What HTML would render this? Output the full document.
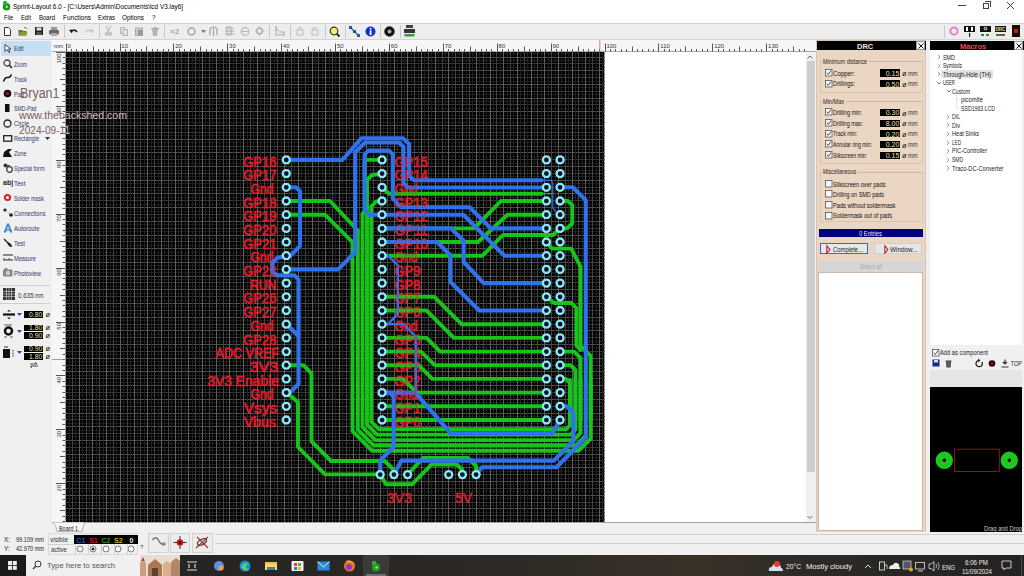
<!DOCTYPE html><html><head><meta charset="utf-8"><style>
*{margin:0;padding:0;box-sizing:border-box}
body{width:1024px;height:576px;overflow:hidden;position:relative;background:#f0f0f0;font-family:"Liberation Sans",sans-serif;color:#000}
.ab{position:absolute}
.t{position:absolute;white-space:nowrap;line-height:1}
svg{position:absolute;overflow:visible}
</style></head><body>
<div class="ab" style="left:0;top:0;width:1024px;height:23px;background:#fff"></div>
<div class="t" style="left:13px;top:2.79px;font-size:7.3px;color:#000;transform:scaleX(0.877);transform-origin:0 0;">Sprint-Layout 6.0 - [C:\Users\Admin\Documents\lcd V3.lay6]</div>
<svg style="left:1px;top:0" width="11" height="11"><circle cx="5.5" cy="6.8" r="3.8" fill="#1e9a1e"/><circle cx="4" cy="3" r="2.2" fill="#34b034"/><circle cx="5.8" cy="6.8" r="1.1" fill="#bfb"/></svg>
<div class="ab" style="left:958px;top:5px;width:8px;height:1px;background:#444"></div>
<div class="ab" style="left:983px;top:3px;width:6px;height:6px;border:1px solid #444"></div><div class="ab" style="left:985px;top:1px;width:6px;height:6px;border-top:1px solid #444;border-right:1px solid #444"></div>
<svg style="left:1006px;top:1px" width="9" height="9"><path d="M1 1L8 8M8 1L1 8" stroke="#3e3e3e" stroke-width="1"/></svg>
<div class="t" style="left:4px;top:14.21px;font-size:7.5px;color:#000;transform:scaleX(0.745);transform-origin:0 0;">File</div>
<div class="t" style="left:21px;top:14.21px;font-size:7.5px;color:#000;transform:scaleX(0.774);transform-origin:0 0;">Edit</div>
<div class="t" style="left:39px;top:14.21px;font-size:7.5px;color:#000;transform:scaleX(0.799);transform-origin:0 0;">Board</div>
<div class="t" style="left:63px;top:14.21px;font-size:7.5px;color:#000;transform:scaleX(0.861);transform-origin:0 0;">Functions</div>
<div class="t" style="left:98px;top:14.21px;font-size:7.5px;color:#000;transform:scaleX(0.800);transform-origin:0 0;">Extras</div>
<div class="t" style="left:122px;top:14.21px;font-size:7.5px;color:#000;transform:scaleX(0.851);transform-origin:0 0;">Options</div>
<div class="t" style="left:152px;top:14.21px;font-size:7.5px;color:#000;transform:scaleX(0.839);transform-origin:0 0;">?</div>
<div class="ab" style="left:0;top:23px;width:1024px;height:17px;background:#ededed;border-top:1px solid #d0d0d0;border-bottom:1px solid #d4d4d4"></div>
<div class="ab" style="left:63.5px;top:25px;width:1px;height:13px;background:#c8c8c8"></div>
<div class="ab" style="left:98.5px;top:25px;width:1px;height:13px;background:#c8c8c8"></div>
<div class="ab" style="left:164px;top:25px;width:1px;height:13px;background:#c8c8c8"></div>
<div class="ab" style="left:269px;top:25px;width:1px;height:13px;background:#c8c8c8"></div>
<div class="ab" style="left:289.5px;top:25px;width:1px;height:13px;background:#c8c8c8"></div>
<div class="ab" style="left:324.5px;top:25px;width:1px;height:13px;background:#c8c8c8"></div>
<div class="ab" style="left:344.5px;top:25px;width:1px;height:13px;background:#c8c8c8"></div>
<div class="ab" style="left:379.5px;top:25px;width:1px;height:13px;background:#c8c8c8"></div>
<div class="ab" style="left:399.5px;top:25px;width:1px;height:13px;background:#c8c8c8"></div>
<div class="ab" style="left:943.5px;top:25px;width:1px;height:13px;background:#c8c8c8"></div>
<svg style="left:4px;top:27px" width="7" height="9"><path d="M0.5 0.5H4.5L6.5 2.5V8.5H0.5Z" fill="#fff" stroke="#333" stroke-width="1"/></svg>
<svg style="left:18px;top:27px" width="10" height="9"><path d="M0.5 3H4L5 4H8.5V8.5H0.5Z" fill="#6d7a2a"/><path d="M2 5H9.5L8 8.5H0.5Z" fill="#8a9a3a"/><path d="M6 0.5Q8 0 9 2" stroke="#5a8a2a" fill="none"/></svg>
<svg style="left:35px;top:27px" width="8" height="8"><rect x="0" y="0" width="8" height="8" fill="#222"/><rect x="1.5" y="0.5" width="5" height="3" fill="#ddd"/><rect x="1.5" y="5" width="5" height="3" fill="#555"/></svg>
<svg style="left:49px;top:27px" width="10" height="9"><rect x="2" y="0" width="6" height="3" fill="#999"/><rect x="0" y="3" width="10" height="4.5" rx="1" fill="#666"/><rect x="2" y="6" width="6" height="3" fill="#aaa"/></svg>
<svg style="left:69px;top:28px" width="9" height="7"><path d="M2 3.5Q6 0.5 8 4" stroke="#223" stroke-width="1.6" fill="none"/><path d="M0 2L3.5 1.5L3 5.5Z" fill="#112"/></svg>
<svg style="left:85px;top:28px" width="9" height="7"><path d="M7 3.5Q3 0.5 1 4" stroke="#c8c8c8" stroke-width="1.6" fill="none"/><path d="M9 2L5.5 1.5L6 5.5Z" fill="#c0c0c0"/></svg>
<svg style="left:105px;top:26px" width="7" height="10"><path d="M1 0L5 7M6 0L2 7" stroke="#b0b0b0" stroke-width="1"/><circle cx="1.8" cy="8" r="1.4" fill="none" stroke="#aaa"/><circle cx="5.2" cy="8" r="1.4" fill="none" stroke="#aaa"/></svg>
<svg style="left:120px;top:27px" width="8" height="9"><rect x="0.5" y="0.5" width="4.5" height="6" fill="#e4e4e4" stroke="#b5b5b5"/><rect x="3" y="2.5" width="4.5" height="6" fill="#e4e4e4" stroke="#b5b5b5"/></svg>
<svg style="left:135px;top:27px" width="9" height="9"><rect x="0.5" y="1" width="7" height="7.5" fill="#c8c8c8" stroke="#aaa"/><rect x="3" y="3" width="5" height="5.5" fill="#9a9a9a"/></svg>
<svg style="left:151px;top:27px" width="8" height="9"><path d="M1 2H7L6 9H2Z" fill="#b5b5b5"/><rect x="0" y="1" width="8" height="1.2" fill="#aaa"/><rect x="3" y="0" width="2" height="1" fill="#aaa"/></svg>
<div class="t" style="left:170px;top:27.5px;font-size:8px;font-weight:bold;color:#a8a8a8">×2</div>
<svg style="left:187px;top:27px" width="10" height="10"><circle cx="4.5" cy="4.5" r="3.5" fill="none" stroke="#a8a8a8" stroke-width="1.6"/></svg>
<svg style="left:201px;top:30px" width="5" height="4"><path d="M0 0H5L2.5 3Z" fill="#777"/></svg>
<svg style="left:209px;top:26px" width="10" height="10"><path d="M1 9V3L3 1M8 9V3L6 1M4.5 0V10" stroke="#a5a5a5" stroke-width="1.2" fill="none"/></svg>
<svg style="left:225px;top:26px" width="10" height="10"><path d="M0 2H9M0 5H9M0 8H9" stroke="#a8a8a8" stroke-width="1.2"/><rect x="2" y="1" width="4" height="8" fill="none" stroke="#b5b5b5"/></svg>
<svg style="left:240px;top:27px" width="10" height="9"><circle cx="5" cy="4.5" r="3.8" fill="none" stroke="#b8b8b8" stroke-width="1.2"/><path d="M1 4.5H9" stroke="#b8b8b8"/></svg>
<svg style="left:255px;top:26px" width="9" height="10"><circle cx="4.5" cy="5" r="2.8" fill="none" stroke="#b0b0b0" stroke-width="1.6"/><path d="M4.5 0V2M4.5 8V10M0 5H2M7 5H9" stroke="#b0b0b0"/></svg>
<svg style="left:275px;top:26px" width="10" height="10"><path d="M1 1V4H4M1 4V9H9V6H4" stroke="#aaa" stroke-width="1.1" fill="none"/><circle cx="1" cy="1" r="1" fill="#aaa"/></svg>
<svg style="left:296px;top:26px" width="8" height="10"><path d="M2 4V2.5Q4 0 6 2.5V4" stroke="#bbb" fill="none"/><rect x="1" y="4" width="6" height="5" fill="none" stroke="#bbb"/></svg>
<svg style="left:311px;top:26px" width="8" height="10"><path d="M2 4V2.5Q4 0 6 2.5" stroke="#bbb" fill="none"/><rect x="1" y="4" width="6" height="5" fill="none" stroke="#bbb"/></svg>
<svg style="left:329px;top:26px" width="12" height="12"><circle cx="5" cy="5" r="3.8" fill="#f4f060" stroke="#333" stroke-width="1.2"/><path d="M7.6 7.6L10.5 10.5" stroke="#222" stroke-width="1.8"/></svg>
<svg style="left:349px;top:26px" width="11" height="11"><path d="M2 2L9 9" stroke="#1a9a3a" stroke-width="1.6"/><rect x="0" y="0" width="3" height="3" fill="#2050d0"/><rect x="8" y="8" width="3" height="3" fill="#2050d0"/><rect x="4" y="4" width="3" height="3" fill="#2050d0"/></svg>
<svg style="left:365px;top:26px" width="11" height="11"><circle cx="5.5" cy="5.5" r="5" fill="#1030d0"/><rect x="4.7" y="4.5" width="1.8" height="4.5" fill="#fff"/><circle cx="5.6" cy="2.8" r="1" fill="#fff"/></svg>
<svg style="left:384px;top:26px" width="11" height="11"><circle cx="5.5" cy="5.5" r="5" fill="#111" stroke="#555" stroke-dasharray="1.2 0.8"/><circle cx="5.5" cy="5.5" r="2" fill="#aaa"/></svg>
<svg style="left:404px;top:25px" width="11" height="12"><rect x="2" y="0" width="7" height="3" fill="#444"/><rect x="0" y="4" width="11" height="4" fill="#333"/><rect x="0.5" y="9" width="10" height="2.5" fill="#3a9a3a"/></svg>
<svg style="left:949px;top:26px" width="10" height="10"><circle cx="5" cy="5" r="3.6" fill="none" stroke="#e080d0" stroke-width="2"/></svg>
<svg style="left:964px;top:26px" width="11" height="11"><rect x="0" y="0" width="11" height="6" fill="#111"/><rect x="2" y="1" width="2" height="4" fill="#fff"/><rect x="7" y="1" width="2" height="4" fill="#fff"/><rect x="5" y="7" width="1.2" height="4" fill="#222"/></svg>
<svg style="left:980px;top:26px" width="11" height="11"><rect x="0" y="0" width="11" height="6" fill="#111"/><circle cx="5.5" cy="2.5" r="1.3" fill="none" stroke="#fff"/><rect x="1" y="8" width="3" height="2" fill="#2a8a2a"/><rect x="6" y="8" width="3" height="2" fill="#2a8a2a"/></svg>
<svg style="left:995px;top:26px" width="11" height="11"><rect x="0" y="0" width="11" height="6" fill="#111"/><text x="0.5" y="5" font-size="4.5" font-family="Liberation Sans" fill="#e8e0a0" font-weight="bold">DRC</text><rect x="1" y="8" width="5" height="2" fill="#2a8a2a"/><rect x="6" y="8" width="4" height="2" fill="#a04040"/></svg>
<svg style="left:1012px;top:25px" width="8" height="12"><rect x="0" y="0" width="8" height="12" fill="#1a0a0a"/><rect x="2" y="4" width="4" height="4" fill="#b02020"/></svg>
<div class="ab" style="left:0;top:40px;width:52px;height:492px;background:#f0f0f0"></div>
<div class="ab" style="left:1px;top:41px;width:50px;height:14.5px;background:#c6dff2"></div>
<div class="t" style="left:14px;top:46.02px;font-size:6.5px;color:#33336e;transform:scaleX(0.848);transform-origin:0 0;">Edit</div>
<div class="t" style="left:14px;top:61.52px;font-size:6.5px;color:#33336e;transform:scaleX(0.782);transform-origin:0 0;">Zoom</div>
<div class="t" style="left:14px;top:76.52px;font-size:6.5px;color:#33336e;transform:scaleX(0.812);transform-origin:0 0;">Track</div>
<div class="t" style="left:14px;top:91.52px;font-size:6.5px;color:#33336e;transform:scaleX(0.865);transform-origin:0 0;">Pad</div>
<div class="t" style="left:14px;top:106.02px;font-size:6.5px;color:#33336e;transform:scaleX(0.799);transform-origin:0 0;">SMD-Pad</div>
<div class="t" style="left:14px;top:121.02px;font-size:6.5px;color:#33336e;transform:scaleX(0.903);transform-origin:0 0;">Circle</div>
<div class="t" style="left:14px;top:136.02px;font-size:6.5px;color:#33336e;transform:scaleX(0.854);transform-origin:0 0;">Rectangle</div>
<div class="t" style="left:14px;top:151.02px;font-size:6.5px;color:#33336e;transform:scaleX(0.844);transform-origin:0 0;">Zone</div>
<div class="t" style="left:14px;top:166.02px;font-size:6.5px;color:#33336e;transform:scaleX(0.844);transform-origin:0 0;">Special form</div>
<div class="t" style="left:14px;top:181.02px;font-size:6.5px;color:#33336e;transform:scaleX(0.965);transform-origin:0 0;">Text</div>
<div class="t" style="left:14px;top:195.52px;font-size:6.5px;color:#33336e;transform:scaleX(0.830);transform-origin:0 0;">Solder mask</div>
<div class="t" style="left:14px;top:210.52px;font-size:6.5px;color:#33336e;transform:scaleX(0.872);transform-origin:0 0;">Connections</div>
<div class="t" style="left:14px;top:225.52px;font-size:6.5px;color:#33336e;transform:scaleX(0.905);transform-origin:0 0;">Autoroute</div>
<div class="t" style="left:14px;top:240.52px;font-size:6.5px;color:#33336e;transform:scaleX(0.923);transform-origin:0 0;">Test</div>
<div class="t" style="left:14px;top:255.52px;font-size:6.5px;color:#33336e;transform:scaleX(0.870);transform-origin:0 0;">Measure</div>
<div class="t" style="left:14px;top:270.52px;font-size:6.5px;color:#33336e;transform:scaleX(0.900);transform-origin:0 0;">Photoview</div>
<div class="ab" style="left:0;top:284.5px;width:50px;height:1px;background:#cfcfcf"></div>
<div class="ab" style="left:0;top:303px;width:50px;height:1px;background:#cfcfcf"></div>
<svg style="left:4px;top:44px" width="7" height="9"><path d="M1 0.5V7.5L3 5.5L5 8.5L6 8L4.3 5H7Z" fill="#fff" stroke="#334" stroke-width="0.9"/></svg>
<svg style="left:3px;top:59px" width="10" height="10"><circle cx="4" cy="4" r="3" fill="none" stroke="#444" stroke-width="1.3"/><path d="M6.3 6.3L9 9" stroke="#222" stroke-width="1.6"/></svg>
<svg style="left:3px;top:74px" width="9" height="8"><path d="M0.5 7.5Q2 3 4.5 3.5T8.5 0.5" stroke="#111" stroke-width="1.5" fill="none"/></svg>
<svg style="left:3px;top:89px" width="9" height="9"><circle cx="4.5" cy="4.5" r="3.8" fill="#1a0808" /><circle cx="4.5" cy="4.5" r="1.6" fill="#8a2020"/></svg>
<svg style="left:5px;top:104px" width="5" height="9"><rect x="0" y="0" width="4.5" height="8" fill="#111"/></svg>
<svg style="left:3px;top:119px" width="9" height="9"><circle cx="4.5" cy="4.5" r="3.5" fill="none" stroke="#222" stroke-width="1.3"/></svg>
<svg style="left:3px;top:135px" width="10" height="7"><rect x="0.7" y="0.7" width="8" height="5.5" fill="none" stroke="#222" stroke-width="1.3"/></svg>
<svg style="left:45px;top:137px" width="5" height="4"><path d="M0 0H5L2.5 3Z" fill="#334"/></svg>
<svg style="left:3px;top:149px" width="9" height="8"><path d="M0 8L1 3L5 0H9L6 3L9 8Z" fill="#111"/></svg>
<svg style="left:3px;top:163px" width="10" height="10"><circle cx="2.5" cy="2.5" r="2" fill="#333"/><circle cx="6.5" cy="6.5" r="2.8" fill="none" stroke="#333" stroke-width="1.2"/><rect x="4" y="2" width="3" height="2" fill="#555"/></svg>
<div class="t" style="left:3px;top:179px;font-size:7px;font-weight:bold;color:#222">ab|</div>
<svg style="left:3px;top:193px" width="9" height="9"><circle cx="4.5" cy="4.5" r="3.6" fill="#e02020"/><circle cx="4.5" cy="4.5" r="1.5" fill="#fff"/></svg>
<svg style="left:3px;top:208px" width="10" height="9"><circle cx="2" cy="2" r="1.6" fill="#111"/><circle cx="8" cy="7" r="1.8" fill="#111"/><path d="M2 2L8 7" stroke="#888" stroke-dasharray="1 1"/></svg>
<svg style="left:3px;top:223px" width="10" height="10"><path d="M0.5 9.5L4 0.5H6L9.5 9.5H7L5 3L3 9.5Z" fill="#4a8ac8"/><path d="M2 7H8" stroke="#4a8ac8" stroke-width="1.3"/></svg>
<svg style="left:3px;top:238px" width="10" height="10"><path d="M1 1L8 8" stroke="#222" stroke-width="1.3"/><path d="M4 4Q9 5 9 9Q5 9 4 4" fill="#222"/></svg>
<svg style="left:3px;top:254px" width="11" height="7"><path d="M0 1H10" stroke="#222"/><path d="M0 6H10M1 4V6M3.5 5V6M6 4V6M8.5 5V6" stroke="#444"/></svg>
<svg style="left:3px;top:268px" width="10" height="9"><rect x="0" y="1.5" width="9.5" height="7" rx="1" fill="#888"/><circle cx="5" cy="5" r="2.2" fill="#ccc"/><rect x="1.5" y="0" width="3" height="2" fill="#888"/></svg>
<svg style="left:3px;top:288px" width="12" height="12"><rect x="0" y="0" width="12" height="12" fill="#333"/><path d="M3.5 0V12M6 0V12M8.5 0V12M0 3.5H12M0 6H12M0 8.5H12" stroke="#ddd" stroke-width="0.6"/></svg>
<svg style="left:3px;top:310px" width="12" height="9"><path d="M0 4.5H12" stroke="#111" stroke-width="2.2"/><path d="M6 0V2M6 7V9" stroke="#333"/><path d="M4.5 1.5L6 0L7.5 1.5M4.5 7.5L6 9L7.5 7.5" stroke="#333" fill="none" stroke-width="0.8"/></svg>
<svg style="left:2px;top:324px" width="13" height="15"><path d="M2 1H10M2 13H5M8 13H11" stroke="#222" stroke-width="0.7"/><circle cx="6.5" cy="7" r="3.5" fill="none" stroke="#111" stroke-width="2.5"/></svg>
<svg style="left:3px;top:346px" width="12" height="13"><rect x="0" y="3" width="7" height="9" fill="#111"/><path d="M1 1H5" stroke="#333"/><path d="M10 4V11" stroke="#333" stroke-dasharray="1 0.6"/></svg>
<svg style="left:16.5px;top:313.0px" width="5" height="4"><path d="M0 0H5L2.5 3Z" fill="#3a3ab0"/></svg>
<svg style="left:16.5px;top:330.0px" width="5" height="4"><path d="M0 0H5L2.5 3Z" fill="#3a3ab0"/></svg>
<svg style="left:16.5px;top:351.0px" width="5" height="4"><path d="M0 0H5L2.5 3Z" fill="#3a3ab0"/></svg>
<div class="ab" style="left:24px;top:311.3px;width:19px;height:6.8px;background:#000"></div>
<div class="t" style="left:24px;top:311.90000000000003px;width:18.3px;text-align:right;font-size:6.8px;color:#e0e0a8">0.80</div>
<div class="t" style="left:45.5px;top:311.0px;font-size:7.5px;color:#222">ø</div>
<div class="ab" style="left:24px;top:324.5px;width:19px;height:6.8px;background:#000"></div>
<div class="t" style="left:24px;top:325.1px;width:18.3px;text-align:right;font-size:6.8px;color:#e0e0a8">1.80</div>
<div class="t" style="left:45.5px;top:324.2px;font-size:7.5px;color:#222">ø</div>
<div class="ab" style="left:24px;top:332px;width:19px;height:6.8px;background:#000"></div>
<div class="t" style="left:24px;top:332.6px;width:18.3px;text-align:right;font-size:6.8px;color:#e0e0a8">0.90</div>
<div class="t" style="left:45.5px;top:331.7px;font-size:7.5px;color:#222">ø</div>
<div class="ab" style="left:24px;top:345.6px;width:19px;height:6.8px;background:#000"></div>
<div class="t" style="left:24px;top:346.20000000000005px;width:18.3px;text-align:right;font-size:6.8px;color:#e0e0a8">0.90</div>
<div class="t" style="left:45.5px;top:345.3px;font-size:7.5px;color:#222">ø</div>
<div class="ab" style="left:24px;top:353px;width:19px;height:6.8px;background:#000"></div>
<div class="t" style="left:24px;top:353.6px;width:18.3px;text-align:right;font-size:6.8px;color:#e0e0a8">1.80</div>
<div class="t" style="left:45.5px;top:352.7px;font-size:7.5px;color:#222">ø</div>
<svg style="left:30px;top:362px" width="8" height="6"><path d="M0 2H7M5 0L7 2M1 4H8M2 6L0 4" stroke="#222" stroke-width="0.8" fill="none"/></svg>
<div class="t" style="left:18px;top:291.91px;font-size:7.5px;color:#333;transform:scaleX(0.831);transform-origin:0 0;">0.635</div>
<div class="t" style="left:34.7px;top:292.82px;font-size:6.5px;color:#333;transform:scaleX(0.767);transform-origin:0 0;">mm</div>
<div class="ab" style="left:52px;top:40px;width:764px;height:12px;background:#f6f6f6;border-bottom:1px solid #a8a8a8"></div>
<div class="ab" style="left:52px;top:52px;width:13.6px;height:470px;background:#f6f6f6"></div>
<div class="ab" style="left:65.6px;top:52px;width:741px;height:470px;background:#fff"></div>
<svg style="left:0;top:0" width="1024" height="576">
<defs><clipPath id="bc"><rect x="65.6" y="52" width="539" height="470"/></clipPath></defs>
<g clip-path="url(#bc)">
<rect x="65.6" y="52" width="539" height="470" fill="#000"/>
<path d="M65.6 519.5H605M65.6 512.5H605M65.6 505.5H605M65.6 498.5H605M65.6 491.5H605M65.6 484.5H605M65.6 478.5H605M65.6 471.5H605M65.6 464.5H605M65.6 457.5H605M65.6 450.5H605M65.6 443.5H605M65.6 436.5H605M65.6 430.5H605M65.6 423.5H605M65.6 416.5H605M65.6 409.5H605M65.6 402.5H605M65.6 395.5H605M65.6 389.5H605M65.6 382.5H605M65.6 375.5H605M65.6 368.5H605M65.6 361.5H605M65.6 354.5H605M65.6 347.5H605M65.6 341.5H605M65.6 334.5H605M65.6 327.5H605M65.6 320.5H605M65.6 313.5H605M65.6 306.5H605M65.6 300.5H605M65.6 293.5H605M65.6 286.5H605M65.6 279.5H605M65.6 272.5H605M65.6 265.5H605M65.6 259.5H605M65.6 252.5H605M65.6 245.5H605M65.6 238.5H605M65.6 231.5H605M65.6 224.5H605M65.6 217.5H605M65.6 211.5H605M65.6 204.5H605M65.6 197.5H605M65.6 190.5H605M65.6 183.5H605M65.6 176.5H605M65.6 170.5H605M65.6 163.5H605M65.6 156.5H605M65.6 149.5H605M65.6 142.5H605M65.6 135.5H605M65.6 128.5H605M65.6 122.5H605M65.6 115.5H605M65.6 108.5H605M65.6 101.5H605M65.6 94.5H605M65.6 87.5H605M65.6 81.5H605M65.6 74.5H605M65.6 67.5H605M65.6 60.5H605M65.6 53.5H605" stroke="#1c1c1c" stroke-width="1"/>
<path d="M65.6 515.5H605M65.6 502.5H605M65.6 488.5H605M65.6 474.5H605M65.6 460.5H605M65.6 447.5H605M65.6 433.5H605M65.6 419.5H605M65.6 406.5H605M65.6 392.5H605M65.6 378.5H605M65.6 365.5H605M65.6 351.5H605M65.6 337.5H605M65.6 324.5H605M65.6 310.5H605M65.6 296.5H605M65.6 282.5H605M65.6 269.5H605M65.6 255.5H605M65.6 241.5H605M65.6 228.5H605M65.6 214.5H605M65.6 200.5H605M65.6 187.5H605M65.6 173.5H605M65.6 159.5H605M65.6 146.5H605M65.6 132.5H605M65.6 118.5H605M65.6 104.5H605M65.6 91.5H605M65.6 77.5H605M65.6 63.5H605" stroke="#373737" stroke-width="1"/>
<path d="M65.6 508.5H605M65.6 495.5H605M65.6 481.5H605M65.6 467.5H605M65.6 454.5H605M65.6 440.5H605M65.6 426.5H605M65.6 413.5H605M65.6 399.5H605M65.6 385.5H605M65.6 371.5H605M65.6 358.5H605M65.6 344.5H605M65.6 330.5H605M65.6 317.5H605M65.6 303.5H605M65.6 289.5H605M65.6 276.5H605M65.6 262.5H605M65.6 248.5H605M65.6 235.5H605M65.6 221.5H605M65.6 207.5H605M65.6 193.5H605M65.6 180.5H605M65.6 166.5H605M65.6 152.5H605M65.6 139.5H605M65.6 125.5H605M65.6 111.5H605M65.6 98.5H605M65.6 84.5H605M65.6 70.5H605M65.6 57.5H605" stroke="#525252" stroke-width="1"/>
<path d="M69.5 52V522M75.5 52V522M82.5 52V522M89.5 52V522M96.5 52V522M103.5 52V522M110.5 52V522M116.5 52V522M123.5 52V522M130.5 52V522M137.5 52V522M144.5 52V522M151.5 52V522M158.5 52V522M164.5 52V522M171.5 52V522M178.5 52V522M185.5 52V522M192.5 52V522M199.5 52V522M205.5 52V522M212.5 52V522M219.5 52V522M226.5 52V522M233.5 52V522M240.5 52V522M247.5 52V522M253.5 52V522M260.5 52V522M267.5 52V522M274.5 52V522M281.5 52V522M288.5 52V522M294.5 52V522M301.5 52V522M308.5 52V522M315.5 52V522M322.5 52V522M329.5 52V522M335.5 52V522M342.5 52V522M349.5 52V522M356.5 52V522M363.5 52V522M370.5 52V522M377.5 52V522M383.5 52V522M390.5 52V522M397.5 52V522M404.5 52V522M411.5 52V522M418.5 52V522M424.5 52V522M431.5 52V522M438.5 52V522M445.5 52V522M452.5 52V522M459.5 52V522M466.5 52V522M472.5 52V522M479.5 52V522M486.5 52V522M493.5 52V522M500.5 52V522M507.5 52V522M513.5 52V522M520.5 52V522M527.5 52V522M534.5 52V522M541.5 52V522M548.5 52V522M555.5 52V522M561.5 52V522M568.5 52V522M575.5 52V522M582.5 52V522M589.5 52V522M596.5 52V522M602.5 52V522" stroke="#222" stroke-width="1"/>
<path d="M72.5 52V522M86.5 52V522M99.5 52V522M113.5 52V522M127.5 52V522M140.5 52V522M154.5 52V522M168.5 52V522M181.5 52V522M195.5 52V522M209.5 52V522M223.5 52V522M236.5 52V522M250.5 52V522M264.5 52V522M277.5 52V522M291.5 52V522M305.5 52V522M318.5 52V522M332.5 52V522M346.5 52V522M359.5 52V522M373.5 52V522M387.5 52V522M401.5 52V522M414.5 52V522M428.5 52V522M442.5 52V522M455.5 52V522M469.5 52V522M483.5 52V522M496.5 52V522M510.5 52V522M524.5 52V522M537.5 52V522M551.5 52V522M565.5 52V522M578.5 52V522M592.5 52V522" stroke="#424242" stroke-width="1"/>
<path d="M65.5 52V522M79.5 52V522M92.5 52V522M106.5 52V522M120.5 52V522M134.5 52V522M147.5 52V522M161.5 52V522M175.5 52V522M188.5 52V522M202.5 52V522M216.5 52V522M229.5 52V522M243.5 52V522M257.5 52V522M270.5 52V522M284.5 52V522M298.5 52V522M312.5 52V522M325.5 52V522M339.5 52V522M353.5 52V522M366.5 52V522M380.5 52V522M394.5 52V522M407.5 52V522M421.5 52V522M435.5 52V522M448.5 52V522M462.5 52V522M476.5 52V522M490.5 52V522M503.5 52V522M517.5 52V522M531.5 52V522M544.5 52V522M558.5 52V522M572.5 52V522M585.5 52V522M599.5 52V522" stroke="#5f5f5f" stroke-width="1"/>
<g font-family="Liberation Sans" font-size="14" fill="#e41b2b" stroke="#e41b2b" stroke-width="0.45">
<text x="243.2" y="166.5" textLength="33.2" lengthAdjust="spacingAndGlyphs">GP16</text>
<text x="243.2" y="180.2" textLength="33.2" lengthAdjust="spacingAndGlyphs">GP17</text>
<text x="250.4" y="193.9" textLength="23.2" lengthAdjust="spacingAndGlyphs">Gnd</text>
<text x="243.2" y="207.6" textLength="33.2" lengthAdjust="spacingAndGlyphs">GP18</text>
<text x="243.2" y="221.3" textLength="33.2" lengthAdjust="spacingAndGlyphs">GP19</text>
<text x="243.2" y="235.0" textLength="33.2" lengthAdjust="spacingAndGlyphs">GP20</text>
<text x="243.2" y="248.6" textLength="33.2" lengthAdjust="spacingAndGlyphs">GP21</text>
<text x="250.4" y="262.3" textLength="23.2" lengthAdjust="spacingAndGlyphs">Gnd</text>
<text x="243.2" y="276.0" textLength="33.2" lengthAdjust="spacingAndGlyphs">GP22</text>
<text x="250" y="289.7" textLength="26.4" lengthAdjust="spacingAndGlyphs">RUN</text>
<text x="243.2" y="303.4" textLength="33.2" lengthAdjust="spacingAndGlyphs">GP26</text>
<text x="243.2" y="317.1" textLength="33.2" lengthAdjust="spacingAndGlyphs">GP27</text>
<text x="250.4" y="330.8" textLength="23.2" lengthAdjust="spacingAndGlyphs">Gnd</text>
<text x="243.2" y="344.5" textLength="33.2" lengthAdjust="spacingAndGlyphs">GP28</text>
<text x="215.6" y="358.2" textLength="63.4" lengthAdjust="spacingAndGlyphs">ADC VREF</text>
<text x="249.4" y="371.9" textLength="29" lengthAdjust="spacingAndGlyphs">3V3</text>
<text x="207.4" y="385.5" textLength="71.6" lengthAdjust="spacingAndGlyphs">3V3 Enable</text>
<text x="250.4" y="399.2" textLength="23.2" lengthAdjust="spacingAndGlyphs">Gnd</text>
<text x="243.7" y="412.9" textLength="33.7" lengthAdjust="spacingAndGlyphs">Vsys</text>
<text x="243.7" y="426.6" textLength="32.2" lengthAdjust="spacingAndGlyphs">Vbus</text>
<text x="394.5" y="166.5" textLength="33.2" lengthAdjust="spacingAndGlyphs">GP15</text>
<text x="394.5" y="180.2" textLength="33.2" lengthAdjust="spacingAndGlyphs">GP14</text>
<text x="394.5" y="193.9" textLength="23.2" lengthAdjust="spacingAndGlyphs">Gnd</text>
<text x="394.5" y="207.6" textLength="33.2" lengthAdjust="spacingAndGlyphs">GP13</text>
<text x="394.5" y="221.3" textLength="33.2" lengthAdjust="spacingAndGlyphs">GP12</text>
<text x="394.5" y="235.0" textLength="33.2" lengthAdjust="spacingAndGlyphs">GP11</text>
<text x="394.5" y="248.6" textLength="33.2" lengthAdjust="spacingAndGlyphs">GP10</text>
<text x="394.5" y="262.3" textLength="23.2" lengthAdjust="spacingAndGlyphs">Gnd</text>
<text x="394.5" y="276.0" textLength="25.8" lengthAdjust="spacingAndGlyphs">GP9</text>
<text x="394.5" y="289.7" textLength="25.8" lengthAdjust="spacingAndGlyphs">GP8</text>
<text x="394.5" y="303.4" textLength="25.8" lengthAdjust="spacingAndGlyphs">GP7</text>
<text x="394.5" y="317.1" textLength="25.8" lengthAdjust="spacingAndGlyphs">GP6</text>
<text x="394.5" y="330.8" textLength="23.2" lengthAdjust="spacingAndGlyphs">Gnd</text>
<text x="394.5" y="344.5" textLength="25.8" lengthAdjust="spacingAndGlyphs">GP5</text>
<text x="394.5" y="358.2" textLength="25.8" lengthAdjust="spacingAndGlyphs">GP4</text>
<text x="394.5" y="371.9" textLength="25.8" lengthAdjust="spacingAndGlyphs">GP3</text>
<text x="394.5" y="385.5" textLength="25.8" lengthAdjust="spacingAndGlyphs">GP2</text>
<text x="394.5" y="399.2" textLength="23.2" lengthAdjust="spacingAndGlyphs">Gnd</text>
<text x="394.5" y="412.9" textLength="25.8" lengthAdjust="spacingAndGlyphs">GP1</text>
<text x="394.5" y="426.6" textLength="25.8" lengthAdjust="spacingAndGlyphs">GP0</text>
</g>
<g font-family="Liberation Sans" font-size="14.5" fill="#cc1f26" stroke="#cc1f26" stroke-width="0.5"><text x="386.7" y="502.8" textLength="25.3" lengthAdjust="spacingAndGlyphs">3V3</text><text x="455" y="502.8" textLength="17" lengthAdjust="spacingAndGlyphs">5V</text></g>
<g fill="none" stroke-linejoin="round" stroke-linecap="round">
<polyline points="286.3,201.0 330.0,201.0 357.7,230.5" stroke="#16c41a" stroke-width="3.9"/>
<polyline points="286.3,214.7 325.0,214.7 352.5,242.2" stroke="#16c41a" stroke-width="3.9"/>
<polyline points="382.1,159.9 365.0,159.9 364.6,161.0 364.6,211.0 362.5,214.0" stroke="#16c41a" stroke-width="3.9"/>
<polyline points="382.1,173.6 372.0,175.0 367.0,180.0" stroke="#16c41a" stroke-width="3.9"/>
<polyline points="382.1,201.0 376.0,201.5 371.2,206.7" stroke="#16c41a" stroke-width="3.9"/>
<polyline points="382.1,187.3 389.0,193.7 541.7,193.7" stroke="#16c41a" stroke-width="3.9"/>
<polyline points="382.1,228.4 474.0,228.4 501.0,201.0 546.4,201.0" stroke="#16c41a" stroke-width="3.9"/>
<polyline points="382.1,242.0 478.0,242.0 507.5,214.7 546.4,214.7" stroke="#16c41a" stroke-width="3.9"/>
<polyline points="382.1,255.7 482.5,255.7 503.0,235.0 553.0,235.0 560.1,228.4" stroke="#16c41a" stroke-width="3.9"/>
<polyline points="560.1,201.0 568.0,201.0 572.2,205.0 572.2,223.5 567.0,228.4 560.1,228.4" stroke="#16c41a" stroke-width="3.9"/>
<polyline points="382.1,296.8 434.3,296.8 461.5,324.2 546.4,324.2" stroke="#16c41a" stroke-width="3.9"/>
<polyline points="382.1,310.5 426.5,310.5 453.9,337.9 546.4,337.9" stroke="#16c41a" stroke-width="3.9"/>
<polyline points="382.1,337.9 426.5,337.9 440.2,351.6 546.4,351.6" stroke="#16c41a" stroke-width="3.9"/>
<polyline points="382.1,351.6 421.0,351.6 434.7,365.2 546.4,365.2" stroke="#16c41a" stroke-width="3.9"/>
<polyline points="382.1,365.2 418.6,365.2 432.3,378.9 546.4,378.9" stroke="#16c41a" stroke-width="3.9"/>
<polyline points="382.1,378.9 403.0,378.9 416.7,392.6 546.4,392.6" stroke="#16c41a" stroke-width="3.9"/>
<polyline points="382.1,406.3 546.4,406.3" stroke="#16c41a" stroke-width="3.9"/>
<polyline points="382.1,420.0 546.4,420.0" stroke="#16c41a" stroke-width="3.9"/>
<polyline points="286.3,365.2 303.4,365.2 311.5,373.4 311.5,441.4 331.0,461.0 384.7,461.0 393.9,470.0 393.9,474.6" stroke="#16c41a" stroke-width="3.9"/>
<polyline points="286.3,392.6 298.0,402.0 298.0,447.0 325.0,474.4 380.2,474.4" stroke="#16c41a" stroke-width="3.9"/>
<polyline points="380.2,474.6 386.0,484.3 412.0,484.3 431.5,464.6 457.0,464.6 462.4,470.0 462.4,474.6" stroke="#16c41a" stroke-width="3.9"/>
<polyline points="407.6,474.6 423.0,458.0 468.0,458.0 476.1,466.0 476.1,474.6" stroke="#16c41a" stroke-width="3.9"/>
<polyline points="546.4,296.8 554.0,303.0 571.5,303.0 576.3,308.0 576.3,345.4 580.5,350.0" stroke="#16c41a" stroke-width="3.9"/>
<polyline points="546.4,242.0 552.0,248.6 571.2,248.6 580.5,266.6 580.5,346.0 590.7,356.0 590.7,420.0" stroke="#16c41a" stroke-width="3.9"/>
<polyline points="560.1,351.6 574.0,351.6 580.5,358.0 580.5,420.0" stroke="#16c41a" stroke-width="3.9"/>
<polyline points="560.1,365.2 570.5,365.2 575.4,370.0 575.4,420.0" stroke="#16c41a" stroke-width="3.9"/>
<polyline points="560.1,378.9 566.0,378.9 569.9,383.0 569.9,420.0" stroke="#16c41a" stroke-width="3.9"/>
<polyline points="352.5,242.2 352.5,431.2 372.0,450.7 578.7,450.7 590.7,438.7 590.7,380.0" stroke="#16c41a" stroke-width="3.9"/>
<polyline points="357.7,230.5 357.7,429.7 373.2,445.2 576.3,445.2 585.8,435.7 585.8,437.0" stroke="#16c41a" stroke-width="3.9"/>
<polyline points="362.5,214.0 362.5,427.1 375.5,440.1 573.5,440.1 580.5,433.1 580.5,380.0" stroke="#16c41a" stroke-width="3.9"/>
<polyline points="367.0,180.0 367.0,424.6 377.0,434.6 570.4,434.6 575.4,429.6 575.4,380.0" stroke="#16c41a" stroke-width="3.9"/>
<polyline points="371.2,206.7 371.2,421.7 378.7,429.2 566.4,429.2 569.9,425.7 569.9,380.0" stroke="#16c41a" stroke-width="3.9"/>
<polyline points="541.7,193.7 552.0,193.7" stroke="#16c41a" stroke-width="1.2"/>
<polyline points="286.3,159.9 342.5,159.9 361.5,138.2 403.0,138.2 409.0,144.0 409.0,176.0 414.0,180.3 541.7,180.3" stroke="#2f72ee" stroke-width="4.1"/>
<polyline points="286.3,269.4 338.2,269.4 355.3,252.0 355.3,152.0 365.0,142.5 399.0,142.5 403.5,147.0 403.5,183.0 408.0,187.5 546.4,187.5" stroke="#2f72ee" stroke-width="4.1"/>
<polyline points="382.1,214.7 369.0,214.7 364.6,209.5 364.6,154.5 368.5,150.6 389.0,150.6 393.0,154.6 393.0,198.5 401.0,207.3 469.7,207.3 490.7,228.4 546.4,228.4" stroke="#2f72ee" stroke-width="4.1"/>
<polyline points="286.3,187.3 296.0,187.3 300.0,191.3 300.0,246.0 290.5,255.7" stroke="#2f72ee" stroke-width="4.1"/>
<polyline points="286.3,255.7 277.0,258.0 272.5,263.0 272.5,271.5 276.5,275.4 294.5,275.4 298.5,279.4 298.5,384.0 290.0,392.6" stroke="#2f72ee" stroke-width="4.1"/>
<polyline points="286.3,324.2 298.5,336.0" stroke="#2f72ee" stroke-width="4.1"/>
<polyline points="382.1,214.7 463.4,214.7 504.4,255.7 546.4,255.7" stroke="#2f72ee" stroke-width="4.1"/>
<polyline points="382.1,228.4 451.0,228.4 463.6,240.8 463.6,262.0 483.7,283.1 546.4,283.1" stroke="#2f72ee" stroke-width="4.1"/>
<polyline points="382.1,242.0 437.0,242.0 450.5,255.3 450.5,282.0 479.3,310.5 546.4,310.5" stroke="#2f72ee" stroke-width="4.1"/>
<polyline points="382.1,392.6 390.0,392.6 393.7,396.5 393.7,446.9 380.2,460.4 380.2,474.6" stroke="#2f72ee" stroke-width="4.1"/>
<polyline points="393.9,474.6 401.5,460.6 553.9,460.6 573.3,441.0 573.3,413.0 567.0,406.3 560.1,406.3" stroke="#2f72ee" stroke-width="4.1"/>
<polyline points="560.1,187.3 572.8,187.3 585.8,200.3 585.8,437.5 556.6,467.3 482.0,467.3 476.1,474.6" stroke="#2f72ee" stroke-width="4.1"/>
<polyline points="382.1,392.6 415.3,392.6 450.7,433.4 552.5,433.4 560.1,420.0" stroke="#2f72ee" stroke-width="4.1"/>
<polyline points="382.1,255.7 388.0,255.7 397.8,265.0 397.8,314.0 388.0,324.2 382.1,324.2" stroke="#2f72ee" stroke-width="2.4"/>
<polyline points="382.1,324.2 403.4,324.2 416.0,337.0 416.0,392.6" stroke="#2f72ee" stroke-width="2.4"/>
<polyline points="541.7,180.3 551.0,180.3 552.8,183.0 552.8,208.0 556.5,212.2 560.1,214.7" stroke="#2f72ee" stroke-width="1.2"/>
</g>
<g fill="#001030" stroke="#8fe8ee" stroke-width="2.3">
<circle cx="286.3" cy="159.9" r="3.5"/>
<circle cx="382.1" cy="159.9" r="3.5"/>
<circle cx="546.4" cy="159.9" r="3.5"/>
<circle cx="560.1" cy="159.9" r="3.5"/>
<circle cx="286.3" cy="173.6" r="3.5"/>
<circle cx="382.1" cy="173.6" r="3.5"/>
<circle cx="546.4" cy="173.6" r="3.5"/>
<circle cx="560.1" cy="173.6" r="3.5"/>
<circle cx="286.3" cy="187.3" r="3.5"/>
<circle cx="382.1" cy="187.3" r="3.5"/>
<circle cx="546.4" cy="187.3" r="3.5"/>
<circle cx="560.1" cy="187.3" r="3.5"/>
<circle cx="286.3" cy="201.0" r="3.5"/>
<circle cx="382.1" cy="201.0" r="3.5"/>
<circle cx="546.4" cy="201.0" r="3.5"/>
<circle cx="560.1" cy="201.0" r="3.5"/>
<circle cx="286.3" cy="214.7" r="3.5"/>
<circle cx="382.1" cy="214.7" r="3.5"/>
<circle cx="546.4" cy="214.7" r="3.5"/>
<circle cx="560.1" cy="214.7" r="3.5"/>
<circle cx="286.3" cy="228.4" r="3.5"/>
<circle cx="382.1" cy="228.4" r="3.5"/>
<circle cx="546.4" cy="228.4" r="3.5"/>
<circle cx="560.1" cy="228.4" r="3.5"/>
<circle cx="286.3" cy="242.0" r="3.5"/>
<circle cx="382.1" cy="242.0" r="3.5"/>
<circle cx="546.4" cy="242.0" r="3.5"/>
<circle cx="560.1" cy="242.0" r="3.5"/>
<circle cx="286.3" cy="255.7" r="3.5"/>
<circle cx="382.1" cy="255.7" r="3.5"/>
<circle cx="546.4" cy="255.7" r="3.5"/>
<circle cx="560.1" cy="255.7" r="3.5"/>
<circle cx="286.3" cy="269.4" r="3.5"/>
<circle cx="382.1" cy="269.4" r="3.5"/>
<circle cx="546.4" cy="269.4" r="3.5"/>
<circle cx="560.1" cy="269.4" r="3.5"/>
<circle cx="286.3" cy="283.1" r="3.5"/>
<circle cx="382.1" cy="283.1" r="3.5"/>
<circle cx="546.4" cy="283.1" r="3.5"/>
<circle cx="560.1" cy="283.1" r="3.5"/>
<circle cx="286.3" cy="296.8" r="3.5"/>
<circle cx="382.1" cy="296.8" r="3.5"/>
<circle cx="546.4" cy="296.8" r="3.5"/>
<circle cx="560.1" cy="296.8" r="3.5"/>
<circle cx="286.3" cy="310.5" r="3.5"/>
<circle cx="382.1" cy="310.5" r="3.5"/>
<circle cx="546.4" cy="310.5" r="3.5"/>
<circle cx="560.1" cy="310.5" r="3.5"/>
<circle cx="286.3" cy="324.2" r="3.5"/>
<circle cx="382.1" cy="324.2" r="3.5"/>
<circle cx="546.4" cy="324.2" r="3.5"/>
<circle cx="560.1" cy="324.2" r="3.5"/>
<circle cx="286.3" cy="337.9" r="3.5"/>
<circle cx="382.1" cy="337.9" r="3.5"/>
<circle cx="546.4" cy="337.9" r="3.5"/>
<circle cx="560.1" cy="337.9" r="3.5"/>
<circle cx="286.3" cy="351.6" r="3.5"/>
<circle cx="382.1" cy="351.6" r="3.5"/>
<circle cx="546.4" cy="351.6" r="3.5"/>
<circle cx="560.1" cy="351.6" r="3.5"/>
<circle cx="286.3" cy="365.2" r="3.5"/>
<circle cx="382.1" cy="365.2" r="3.5"/>
<circle cx="546.4" cy="365.2" r="3.5"/>
<circle cx="560.1" cy="365.2" r="3.5"/>
<circle cx="286.3" cy="378.9" r="3.5"/>
<circle cx="382.1" cy="378.9" r="3.5"/>
<circle cx="546.4" cy="378.9" r="3.5"/>
<circle cx="560.1" cy="378.9" r="3.5"/>
<circle cx="286.3" cy="392.6" r="3.5"/>
<circle cx="382.1" cy="392.6" r="3.5"/>
<circle cx="546.4" cy="392.6" r="3.5"/>
<circle cx="560.1" cy="392.6" r="3.5"/>
<circle cx="286.3" cy="406.3" r="3.5"/>
<circle cx="382.1" cy="406.3" r="3.5"/>
<circle cx="546.4" cy="406.3" r="3.5"/>
<circle cx="560.1" cy="406.3" r="3.5"/>
<circle cx="286.3" cy="420.0" r="3.5"/>
<circle cx="382.1" cy="420.0" r="3.5"/>
<circle cx="546.4" cy="420.0" r="3.5"/>
<circle cx="560.1" cy="420.0" r="3.5"/>
<circle cx="380.2" cy="474.6" r="3.5"/>
<circle cx="393.9" cy="474.6" r="3.5"/>
<circle cx="407.6" cy="474.6" r="3.5"/>
<circle cx="448.7" cy="474.6" r="3.5"/>
<circle cx="462.4" cy="474.6" r="3.5"/>
<circle cx="476.1" cy="474.6" r="3.5"/>
</g>
<g opacity="0.45"><g font-family="Liberation Sans" font-size="14" fill="#e41b2b" stroke="#e41b2b" stroke-width="0.45">
<text x="243.2" y="166.5" textLength="33.2" lengthAdjust="spacingAndGlyphs">GP16</text>
<text x="243.2" y="180.2" textLength="33.2" lengthAdjust="spacingAndGlyphs">GP17</text>
<text x="250.4" y="193.9" textLength="23.2" lengthAdjust="spacingAndGlyphs">Gnd</text>
<text x="243.2" y="207.6" textLength="33.2" lengthAdjust="spacingAndGlyphs">GP18</text>
<text x="243.2" y="221.3" textLength="33.2" lengthAdjust="spacingAndGlyphs">GP19</text>
<text x="243.2" y="235.0" textLength="33.2" lengthAdjust="spacingAndGlyphs">GP20</text>
<text x="243.2" y="248.6" textLength="33.2" lengthAdjust="spacingAndGlyphs">GP21</text>
<text x="250.4" y="262.3" textLength="23.2" lengthAdjust="spacingAndGlyphs">Gnd</text>
<text x="243.2" y="276.0" textLength="33.2" lengthAdjust="spacingAndGlyphs">GP22</text>
<text x="250" y="289.7" textLength="26.4" lengthAdjust="spacingAndGlyphs">RUN</text>
<text x="243.2" y="303.4" textLength="33.2" lengthAdjust="spacingAndGlyphs">GP26</text>
<text x="243.2" y="317.1" textLength="33.2" lengthAdjust="spacingAndGlyphs">GP27</text>
<text x="250.4" y="330.8" textLength="23.2" lengthAdjust="spacingAndGlyphs">Gnd</text>
<text x="243.2" y="344.5" textLength="33.2" lengthAdjust="spacingAndGlyphs">GP28</text>
<text x="215.6" y="358.2" textLength="63.4" lengthAdjust="spacingAndGlyphs">ADC VREF</text>
<text x="249.4" y="371.9" textLength="29" lengthAdjust="spacingAndGlyphs">3V3</text>
<text x="207.4" y="385.5" textLength="71.6" lengthAdjust="spacingAndGlyphs">3V3 Enable</text>
<text x="250.4" y="399.2" textLength="23.2" lengthAdjust="spacingAndGlyphs">Gnd</text>
<text x="243.7" y="412.9" textLength="33.7" lengthAdjust="spacingAndGlyphs">Vsys</text>
<text x="243.7" y="426.6" textLength="32.2" lengthAdjust="spacingAndGlyphs">Vbus</text>
<text x="394.5" y="166.5" textLength="33.2" lengthAdjust="spacingAndGlyphs">GP15</text>
<text x="394.5" y="180.2" textLength="33.2" lengthAdjust="spacingAndGlyphs">GP14</text>
<text x="394.5" y="193.9" textLength="23.2" lengthAdjust="spacingAndGlyphs">Gnd</text>
<text x="394.5" y="207.6" textLength="33.2" lengthAdjust="spacingAndGlyphs">GP13</text>
<text x="394.5" y="221.3" textLength="33.2" lengthAdjust="spacingAndGlyphs">GP12</text>
<text x="394.5" y="235.0" textLength="33.2" lengthAdjust="spacingAndGlyphs">GP11</text>
<text x="394.5" y="248.6" textLength="33.2" lengthAdjust="spacingAndGlyphs">GP10</text>
<text x="394.5" y="262.3" textLength="23.2" lengthAdjust="spacingAndGlyphs">Gnd</text>
<text x="394.5" y="276.0" textLength="25.8" lengthAdjust="spacingAndGlyphs">GP9</text>
<text x="394.5" y="289.7" textLength="25.8" lengthAdjust="spacingAndGlyphs">GP8</text>
<text x="394.5" y="303.4" textLength="25.8" lengthAdjust="spacingAndGlyphs">GP7</text>
<text x="394.5" y="317.1" textLength="25.8" lengthAdjust="spacingAndGlyphs">GP6</text>
<text x="394.5" y="330.8" textLength="23.2" lengthAdjust="spacingAndGlyphs">Gnd</text>
<text x="394.5" y="344.5" textLength="25.8" lengthAdjust="spacingAndGlyphs">GP5</text>
<text x="394.5" y="358.2" textLength="25.8" lengthAdjust="spacingAndGlyphs">GP4</text>
<text x="394.5" y="371.9" textLength="25.8" lengthAdjust="spacingAndGlyphs">GP3</text>
<text x="394.5" y="385.5" textLength="25.8" lengthAdjust="spacingAndGlyphs">GP2</text>
<text x="394.5" y="399.2" textLength="23.2" lengthAdjust="spacingAndGlyphs">Gnd</text>
<text x="394.5" y="412.9" textLength="25.8" lengthAdjust="spacingAndGlyphs">GP1</text>
<text x="394.5" y="426.6" textLength="25.8" lengthAdjust="spacingAndGlyphs">GP0</text>
</g>
<g font-family="Liberation Sans" font-size="14.5" fill="#cc1f26" stroke="#cc1f26" stroke-width="0.5"><text x="386.7" y="502.8" textLength="25.3" lengthAdjust="spacingAndGlyphs">3V3</text><text x="455" y="502.8" textLength="17" lengthAdjust="spacingAndGlyphs">5V</text></g></g>
</g></svg>
<svg style="left:0;top:0" width="1024" height="576"><path d="M66.5 43.5V51.5M71.5 49V51.5M76.5 49V51.5M82.5 49V51.5M87.5 49V51.5M93.5 46.5V51.5M98.5 49V51.5M103.5 49V51.5M109.5 49V51.5M114.5 49V51.5M120.5 43.5V51.5M125.5 49V51.5M130.5 49V51.5M136.5 49V51.5M141.5 49V51.5M146.5 46.5V51.5M152.5 49V51.5M157.5 49V51.5M163.5 49V51.5M168.5 49V51.5M173.5 43.5V51.5M179.5 49V51.5M184.5 49V51.5M190.5 49V51.5M195.5 49V51.5M200.5 46.5V51.5M206.5 49V51.5M211.5 49V51.5M217.5 49V51.5M222.5 49V51.5M227.5 43.5V51.5M233.5 49V51.5M238.5 49V51.5M243.5 49V51.5M249.5 49V51.5M254.5 46.5V51.5M260.5 49V51.5M265.5 49V51.5M270.5 49V51.5M276.5 49V51.5M281.5 43.5V51.5M287.5 49V51.5M292.5 49V51.5M297.5 49V51.5M303.5 49V51.5M308.5 46.5V51.5M314.5 49V51.5M319.5 49V51.5M324.5 49V51.5M330.5 49V51.5M335.5 43.5V51.5M340.5 49V51.5M346.5 49V51.5M351.5 49V51.5M357.5 49V51.5M362.5 46.5V51.5M367.5 49V51.5M373.5 49V51.5M378.5 49V51.5M384.5 49V51.5M389.5 43.5V51.5M394.5 49V51.5M400.5 49V51.5M405.5 49V51.5M411.5 49V51.5M416.5 46.5V51.5M421.5 49V51.5M427.5 49V51.5M432.5 49V51.5M438.5 49V51.5M443.5 43.5V51.5M448.5 49V51.5M454.5 49V51.5M459.5 49V51.5M464.5 49V51.5M470.5 46.5V51.5M475.5 49V51.5M481.5 49V51.5M486.5 49V51.5M491.5 49V51.5M497.5 43.5V51.5M502.5 49V51.5M508.5 49V51.5M513.5 49V51.5M518.5 49V51.5M524.5 46.5V51.5M529.5 49V51.5M535.5 49V51.5M540.5 49V51.5M545.5 49V51.5M551.5 43.5V51.5M556.5 49V51.5M561.5 49V51.5M567.5 49V51.5M572.5 49V51.5M578.5 46.5V51.5M583.5 49V51.5M588.5 49V51.5M594.5 49V51.5M599.5 49V51.5M605.5 43.5V51.5M610.5 49V51.5M615.5 49V51.5M621.5 49V51.5M626.5 49V51.5M632.5 46.5V51.5M637.5 49V51.5M642.5 49V51.5M648.5 49V51.5M653.5 49V51.5M658.5 43.5V51.5M664.5 49V51.5M669.5 49V51.5M675.5 49V51.5M680.5 49V51.5M685.5 46.5V51.5M691.5 49V51.5M696.5 49V51.5M702.5 49V51.5M707.5 49V51.5M712.5 43.5V51.5M718.5 49V51.5M723.5 49V51.5M729.5 49V51.5M734.5 49V51.5M739.5 46.5V51.5M745.5 49V51.5M750.5 49V51.5M756.5 49V51.5M761.5 49V51.5M766.5 43.5V51.5M772.5 49V51.5M777.5 49V51.5M782.5 49V51.5M788.5 49V51.5M793.5 46.5V51.5M799.5 49V51.5M804.5 49V51.5M62.5 521.5H65M62.5 516.5H65M60 510.5H65M62.5 505.5H65M62.5 499.5H65M62.5 494.5H65M62.5 489.5H65M56 483.5H65M62.5 478.5H65M62.5 472.5H65M62.5 467.5H65M62.5 462.5H65M60 456.5H65M62.5 451.5H65M62.5 445.5H65M62.5 440.5H65M62.5 435.5H65M56 429.5H65M62.5 424.5H65M62.5 419.5H65M62.5 413.5H65M62.5 408.5H65M60 402.5H65M62.5 397.5H65M62.5 392.5H65M62.5 386.5H65M62.5 381.5H65M56 375.5H65M62.5 370.5H65M62.5 365.5H65M62.5 359.5H65M62.5 354.5H65M60 348.5H65M62.5 343.5H65M62.5 338.5H65M62.5 332.5H65M62.5 327.5H65M56 322.5H65M62.5 316.5H65M62.5 311.5H65M62.5 305.5H65M62.5 300.5H65M60 295.5H65M62.5 289.5H65M62.5 284.5H65M62.5 278.5H65M62.5 273.5H65M56 268.5H65M62.5 262.5H65M62.5 257.5H65M62.5 251.5H65M62.5 246.5H65M60 241.5H65M62.5 235.5H65M62.5 230.5H65M62.5 224.5H65M62.5 219.5H65M56 214.5H65M62.5 208.5H65M62.5 203.5H65M62.5 198.5H65M62.5 192.5H65M60 187.5H65M62.5 181.5H65M62.5 176.5H65M62.5 171.5H65M62.5 165.5H65M56 160.5H65M62.5 154.5H65M62.5 149.5H65M62.5 144.5H65M62.5 138.5H65M60 133.5H65M62.5 127.5H65M62.5 122.5H65M62.5 117.5H65M62.5 111.5H65M56 106.5H65M62.5 101.5H65M62.5 95.5H65M62.5 90.5H65M62.5 84.5H65M60 79.5H65M62.5 74.5H65M62.5 68.5H65M62.5 63.5H65M62.5 57.5H65M56 52.5H65" stroke="#555" stroke-width="1"/>
<g font-family="Liberation Sans" font-size="6" fill="#333">
<text x="67.4" y="48.3">0</text>
<text x="121.3" y="48.3">10</text>
<text x="175.2" y="48.3">20</text>
<text x="229.1" y="48.3">30</text>
<text x="283.0" y="48.3">40</text>
<text x="336.9" y="48.3">50</text>
<text x="390.8" y="48.3">60</text>
<text x="444.7" y="48.3">70</text>
<text x="498.6" y="48.3">80</text>
<text x="552.5" y="48.3">90</text>
<text x="606.4" y="48.3">100</text>
<text x="660.3" y="48.3">110</text>
<text x="714.2" y="48.3">120</text>
<text x="768.1" y="48.3">130</text>
<text transform="translate(60.8,484.7) rotate(-90)" text-anchor="end">20</text>
<text transform="translate(60.8,430.8) rotate(-90)" text-anchor="end">30</text>
<text transform="translate(60.8,376.9) rotate(-90)" text-anchor="end">40</text>
<text transform="translate(60.8,323.0) rotate(-90)" text-anchor="end">50</text>
<text transform="translate(60.8,269.1) rotate(-90)" text-anchor="end">60</text>
<text transform="translate(60.8,215.2) rotate(-90)" text-anchor="end">70</text>
<text transform="translate(60.8,161.3) rotate(-90)" text-anchor="end">80</text>
<text transform="translate(60.8,107.4) rotate(-90)" text-anchor="end">90</text>
<text transform="translate(60.8,53.5) rotate(-90)" text-anchor="end">100</text>
<text x="54" y="48.3" font-size="5.5">mm</text>
</g>
<path d="M599.8 40V52M52 359.5H65" stroke="#e06060" stroke-width="0.8"/>
</svg>
<div class="ab" style="left:806px;top:52px;width:10px;height:470px;background:#f0f0f0"></div>
<div class="ab" style="left:807px;top:61px;width:7.5px;height:411px;background:#cdcdcd"></div>
<div class="ab" style="left:52px;top:522px;width:764px;height:10px;background:#f0f0f0;border-top:1px solid #a0a0a0"></div>
<svg style="left:0;top:0" width="1024" height="576"><path d="M52.5 522.5Q56 524 57 531.5H82L84.5 522.5" fill="#f7f7f7" stroke="#999" stroke-width="0.7"/><path d="M807.5 58.5L810 56L812.5 58.5M807.5 516L810 518.5L812.5 516" stroke="#555" stroke-width="0.9" fill="none"/></svg>
<div class="t" style="left:59px;top:525.52px;font-size:6.5px;color:#222;transform:scaleX(0.834);transform-origin:0 0;">Board 1</div>
<div class="ab" style="left:816px;top:40px;width:110px;height:493px;background:#ebd6c4;border:1px solid #d8c4b4"></div>
<div class="ab" style="left:816.5px;top:41px;width:109px;height:9px;background:#000"></div>
<div class="t" style="left:857px;top:42.91px;font-size:7.5px;color:#e8e8e8;font-weight:bold;">DRC</div>
<div class="ab" style="left:916px;top:41px;width:8.5px;height:8.5px;background:#f4f4f4;border:0.5px solid #999"></div>
<svg style="left:917.5px;top:42.5px" width="6" height="6"><path d="M0.5 0.5L5.5 5.5M5.5 0.5L0.5 5.5" stroke="#111" stroke-width="1"/></svg>
<div class="ab" style="left:820px;top:61px;width:102.5px;height:31.5px;border:1px solid #d9c3b1;border-top-color:#cbb6a5"></div>
<div class="ab" style="left:822px;top:58px;width:47px;height:6px;background:#ebd6c4"></div>
<div class="t" style="left:823px;top:58.72px;font-size:6.5px;color:#2a1a1a;transform:scaleX(0.840);transform-origin:0 0;">Minimum distance</div>
<div class="ab" style="left:820px;top:101px;width:102.5px;height:62.5px;border:1px solid #d9c3b1;border-top-color:#cbb6a5"></div>
<div class="ab" style="left:822px;top:98px;width:24px;height:6px;background:#ebd6c4"></div>
<div class="t" style="left:823px;top:98.72px;font-size:6.5px;color:#2a1a1a;transform:scaleX(0.855);transform-origin:0 0;">Min/Max</div>
<div class="ab" style="left:820px;top:171.5px;width:102.5px;height:50.5px;border:1px solid #d9c3b1;border-top-color:#cbb6a5"></div>
<div class="ab" style="left:822px;top:168.5px;width:36px;height:6px;background:#ebd6c4"></div>
<div class="t" style="left:823px;top:169.22px;font-size:6.5px;color:#2a1a1a;transform:scaleX(0.801);transform-origin:0 0;">Miscellaneous</div>
<svg style="left:824.5px;top:68.7px" width="8" height="8"><rect x="0.5" y="0.5" width="6.5" height="6.5" fill="#f8f8f8" stroke="#555" stroke-width="0.8"/><path d="M1.8 3.8L3.3 5.4L6 1.6" stroke="#333" stroke-width="0.9" fill="none"/></svg>
<div class="t" style="left:832.5px;top:70.62px;font-size:6.5px;color:#111;transform:scaleX(0.951);transform-origin:0 0;">Copper:</div>
<div class="ab" style="left:880px;top:69.4px;width:20px;height:7.2px;background:#000"></div>
<div class="t" style="left:880px;top:69.8px;width:19.3px;text-align:right;font-size:7px;color:#e6e6a0">0.15</div>
<div class="t" style="left:902px;top:70.01px;font-size:7.5px;color:#222;">ø</div>
<div class="t" style="left:907.5px;top:70.62px;font-size:6.5px;color:#333;transform:scaleX(0.877);transform-origin:0 0;">mm</div>
<svg style="left:824.5px;top:79.5px" width="8" height="8"><rect x="0.5" y="0.5" width="6.5" height="6.5" fill="#f8f8f8" stroke="#555" stroke-width="0.8"/><path d="M1.8 3.8L3.3 5.4L6 1.6" stroke="#333" stroke-width="0.9" fill="none"/></svg>
<div class="t" style="left:832.5px;top:81.42px;font-size:6.5px;color:#111;transform:scaleX(0.883);transform-origin:0 0;">Drillings:</div>
<div class="ab" style="left:880px;top:80.2px;width:20px;height:7.2px;background:#000"></div>
<div class="t" style="left:880px;top:80.6px;width:19.3px;text-align:right;font-size:7px;color:#e6e6a0">0.50</div>
<div class="t" style="left:902px;top:80.81px;font-size:7.5px;color:#222;">ø</div>
<div class="t" style="left:907.5px;top:81.42px;font-size:6.5px;color:#333;transform:scaleX(0.877);transform-origin:0 0;">mm</div>
<svg style="left:824.5px;top:108.2px" width="8" height="8"><rect x="0.5" y="0.5" width="6.5" height="6.5" fill="#f8f8f8" stroke="#555" stroke-width="0.8"/><path d="M1.8 3.8L3.3 5.4L6 1.6" stroke="#333" stroke-width="0.9" fill="none"/></svg>
<div class="t" style="left:832.5px;top:110.12px;font-size:6.5px;color:#111;transform:scaleX(0.854);transform-origin:0 0;">Drilling min:</div>
<div class="ab" style="left:880px;top:108.9px;width:20px;height:7.2px;background:#000"></div>
<div class="t" style="left:880px;top:109.3px;width:19.3px;text-align:right;font-size:7px;color:#e6e6a0">0.30</div>
<div class="t" style="left:902px;top:109.51px;font-size:7.5px;color:#222;">ø</div>
<div class="t" style="left:907.5px;top:110.12px;font-size:6.5px;color:#333;transform:scaleX(0.877);transform-origin:0 0;">mm</div>
<svg style="left:824.5px;top:118.9px" width="8" height="8"><rect x="0.5" y="0.5" width="6.5" height="6.5" fill="#f8f8f8" stroke="#555" stroke-width="0.8"/><path d="M1.8 3.8L3.3 5.4L6 1.6" stroke="#333" stroke-width="0.9" fill="none"/></svg>
<div class="t" style="left:832.5px;top:120.82px;font-size:6.5px;color:#111;transform:scaleX(0.839);transform-origin:0 0;">Drilling max:</div>
<div class="ab" style="left:880px;top:119.6px;width:20px;height:7.2px;background:#000"></div>
<div class="t" style="left:880px;top:120.0px;width:19.3px;text-align:right;font-size:7px;color:#e6e6a0">8.00</div>
<div class="t" style="left:902px;top:120.21px;font-size:7.5px;color:#222;">ø</div>
<div class="t" style="left:907.5px;top:120.82px;font-size:6.5px;color:#333;transform:scaleX(0.877);transform-origin:0 0;">mm</div>
<svg style="left:824.5px;top:129.5px" width="8" height="8"><rect x="0.5" y="0.5" width="6.5" height="6.5" fill="#f8f8f8" stroke="#555" stroke-width="0.8"/><path d="M1.8 3.8L3.3 5.4L6 1.6" stroke="#333" stroke-width="0.9" fill="none"/></svg>
<div class="t" style="left:832.5px;top:131.42px;font-size:6.5px;color:#111;transform:scaleX(0.797);transform-origin:0 0;">Track min:</div>
<div class="ab" style="left:880px;top:130.2px;width:20px;height:7.2px;background:#000"></div>
<div class="t" style="left:880px;top:130.6px;width:19.3px;text-align:right;font-size:7px;color:#e6e6a0">0.20</div>
<div class="t" style="left:902px;top:130.81px;font-size:7.5px;color:#222;">ø</div>
<div class="t" style="left:907.5px;top:131.42px;font-size:6.5px;color:#333;transform:scaleX(0.877);transform-origin:0 0;">mm</div>
<svg style="left:824.5px;top:140.2px" width="8" height="8"><rect x="0.5" y="0.5" width="6.5" height="6.5" fill="#f8f8f8" stroke="#555" stroke-width="0.8"/><path d="M1.8 3.8L3.3 5.4L6 1.6" stroke="#333" stroke-width="0.9" fill="none"/></svg>
<div class="t" style="left:832.5px;top:142.12px;font-size:6.5px;color:#111;transform:scaleX(0.794);transform-origin:0 0;">Annular ring min:</div>
<div class="ab" style="left:880px;top:140.9px;width:20px;height:7.2px;background:#000"></div>
<div class="t" style="left:880px;top:141.3px;width:19.3px;text-align:right;font-size:7px;color:#e6e6a0">0.20</div>
<div class="t" style="left:902px;top:141.51px;font-size:7.5px;color:#222;">ø</div>
<div class="t" style="left:907.5px;top:142.12px;font-size:6.5px;color:#333;transform:scaleX(0.877);transform-origin:0 0;">mm</div>
<svg style="left:824.5px;top:150.9px" width="8" height="8"><rect x="0.5" y="0.5" width="6.5" height="6.5" fill="#f8f8f8" stroke="#555" stroke-width="0.8"/><path d="M1.8 3.8L3.3 5.4L6 1.6" stroke="#333" stroke-width="0.9" fill="none"/></svg>
<div class="t" style="left:832.5px;top:152.82px;font-size:6.5px;color:#111;transform:scaleX(0.771);transform-origin:0 0;">Silkscreen min:</div>
<div class="ab" style="left:880px;top:151.6px;width:20px;height:7.2px;background:#000"></div>
<div class="t" style="left:880px;top:152.0px;width:19.3px;text-align:right;font-size:7px;color:#e6e6a0">0.15</div>
<div class="t" style="left:902px;top:152.21px;font-size:7.5px;color:#222;">ø</div>
<div class="t" style="left:907.5px;top:152.82px;font-size:6.5px;color:#333;transform:scaleX(0.877);transform-origin:0 0;">mm</div>
<svg style="left:824.5px;top:179.7px" width="8" height="8"><rect x="0.5" y="0.5" width="6.5" height="6.5" fill="#f8f8f8" stroke="#555" stroke-width="0.8"/></svg>
<div class="t" style="left:832.5px;top:181.62px;font-size:6.5px;color:#111;transform:scaleX(0.870);transform-origin:0 0;">Silkscreen over pads</div>
<svg style="left:824.5px;top:190.2px" width="8" height="8"><rect x="0.5" y="0.5" width="6.5" height="6.5" fill="#f8f8f8" stroke="#555" stroke-width="0.8"/></svg>
<div class="t" style="left:832.5px;top:192.12px;font-size:6.5px;color:#111;transform:scaleX(0.835);transform-origin:0 0;">Drilling on SMD pads</div>
<svg style="left:824.5px;top:200.9px" width="8" height="8"><rect x="0.5" y="0.5" width="6.5" height="6.5" fill="#f8f8f8" stroke="#555" stroke-width="0.8"/></svg>
<div class="t" style="left:832.5px;top:202.82px;font-size:6.5px;color:#111;transform:scaleX(0.865);transform-origin:0 0;">Pads without soldermask</div>
<svg style="left:824.5px;top:211.5px" width="8" height="8"><rect x="0.5" y="0.5" width="6.5" height="6.5" fill="#f8f8f8" stroke="#555" stroke-width="0.8"/></svg>
<div class="t" style="left:832.5px;top:213.42px;font-size:6.5px;color:#111;transform:scaleX(0.864);transform-origin:0 0;">Soldermask out of pads</div>
<div class="ab" style="left:818.8px;top:228.5px;width:104.2px;height:8.8px;background:#00007e"></div>
<div class="t" style="left:859px;top:230.52px;font-size:6.5px;color:#e0e0f0;transform:scaleX(0.897);transform-origin:0 0;">0 Entries</div>
<div class="ab" style="left:819.7px;top:243.2px;width:48.3px;height:11.3px;background:#e8e8e8;border:1px solid #2f6fc8"></div>
<div class="ab" style="left:873.5px;top:243.2px;width:48.8px;height:11.3px;background:#e6e6e6;border:0.5px solid #d0d0d0"></div>
<svg style="left:826px;top:244.5px" width="5" height="9"><path d="M0.8 0.8L4 4.5L0.8 8.2Z" fill="none" stroke="#b02a2a" stroke-width="1.1"/></svg>
<svg style="left:883.5px;top:244.5px" width="5" height="9"><path d="M0.8 0.8L4 4.5L0.8 8.2Z" fill="none" stroke="#b02a2a" stroke-width="1.1"/></svg>
<div class="t" style="left:833px;top:246.82px;font-size:6.5px;color:#222;transform:scaleX(0.903);transform-origin:0 0;">Complete...</div>
<div class="t" style="left:889.5px;top:246.82px;font-size:6.5px;color:#222;transform:scaleX(0.976);transform-origin:0 0;">Window...</div>
<div class="ab" style="left:819px;top:261px;width:103.5px;height:10.5px;background:#d6d6d6"></div>
<div class="t" style="left:860px;top:264.12px;font-size:6.5px;color:#a8a8a8;transform:scaleX(0.834);transform-origin:0 0;">Select all</div>
<div class="ab" style="left:818px;top:272px;width:105px;height:259px;background:#fff;border:1px solid #cbb8a8"></div>
<div class="ab" style="left:926px;top:40px;width:98px;height:493px;background:#f0f0f0"></div>
<div class="ab" style="left:930px;top:41px;width:94px;height:9px;background:#000"></div>
<div class="t" style="left:960px;top:42.91px;font-size:7.5px;color:#e05050;font-weight:bold;">Macros</div>
<div class="ab" style="left:930px;top:50px;width:92px;height:295px;background:#fff"></div>
<div class="ab" style="left:930px;top:387px;width:92px;height:146px;background:#000"></div>
<div class="ab" style="left:1014px;top:41px;width:8.5px;height:8.5px;background:#f4f4f4;border:0.5px solid #999"></div>
<svg style="left:1015.5px;top:42.5px" width="6" height="6"><path d="M0.5 0.5L5.5 5.5M5.5 0.5L0.5 5.5" stroke="#111" stroke-width="1"/></svg>
<div class="ab" style="left:940.5px;top:70px;width:52px;height:8px;background:#e2e2e2"></div>
<svg style="left:937.0px;top:54.0px" width="4" height="6"><path d="M0.8 0.8L3 3L0.8 5.2" stroke="#888" fill="none" stroke-width="0.8"/></svg>
<div class="t" style="left:942.5px;top:54.62px;font-size:6.5px;color:#222;transform:scaleX(0.831);transform-origin:0 0;">SMD</div>
<svg style="left:937.0px;top:62.8px" width="4" height="6"><path d="M0.8 0.8L3 3L0.8 5.2" stroke="#888" fill="none" stroke-width="0.8"/></svg>
<div class="t" style="left:942.5px;top:63.42px;font-size:6.5px;color:#222;transform:scaleX(0.762);transform-origin:0 0;">Symbols</div>
<svg style="left:937.0px;top:71.0px" width="4" height="6"><path d="M0.8 0.8L3 3L0.8 5.2" stroke="#888" fill="none" stroke-width="0.8"/></svg>
<div class="t" style="left:942.5px;top:71.62px;font-size:6.5px;color:#222;transform:scaleX(0.880);transform-origin:0 0;">Through-Hole (TH)</div>
<svg style="left:936.2px;top:80.5px" width="6" height="4"><path d="M0.8 0.8L3 3L5.2 0.8" stroke="#555" fill="none" stroke-width="0.8"/></svg>
<div class="t" style="left:942.5px;top:80.12px;font-size:6.5px;color:#222;transform:scaleX(0.664);transform-origin:0 0;">USER</div>
<svg style="left:945.5px;top:89.0px" width="6" height="4"><path d="M0.8 0.8L3 3L5.2 0.8" stroke="#555" fill="none" stroke-width="0.8"/></svg>
<div class="t" style="left:951.8px;top:88.62px;font-size:6.5px;color:#222;transform:scaleX(0.804);transform-origin:0 0;">Custom</div>
<div class="t" style="left:960.8px;top:97.42px;font-size:6.5px;color:#222;transform:scaleX(0.909);transform-origin:0 0;">picomite</div>
<div class="t" style="left:960.8px;top:105.82px;font-size:6.5px;color:#222;transform:scaleX(0.797);transform-origin:0 0;">SSD1963 LCD</div>
<svg style="left:946.3px;top:113.8px" width="4" height="6"><path d="M0.8 0.8L3 3L0.8 5.2" stroke="#888" fill="none" stroke-width="0.8"/></svg>
<div class="t" style="left:951.8px;top:114.42px;font-size:6.5px;color:#222;transform:scaleX(0.791);transform-origin:0 0;">DIL</div>
<svg style="left:946.3px;top:122.2px" width="4" height="6"><path d="M0.8 0.8L3 3L0.8 5.2" stroke="#888" fill="none" stroke-width="0.8"/></svg>
<div class="t" style="left:951.8px;top:122.82px;font-size:6.5px;color:#222;transform:scaleX(0.852);transform-origin:0 0;">Div</div>
<svg style="left:946.3px;top:130.8px" width="4" height="6"><path d="M0.8 0.8L3 3L0.8 5.2" stroke="#888" fill="none" stroke-width="0.8"/></svg>
<div class="t" style="left:951.8px;top:131.42px;font-size:6.5px;color:#222;transform:scaleX(0.859);transform-origin:0 0;">Heat Sinks</div>
<svg style="left:946.3px;top:139.5px" width="4" height="6"><path d="M0.8 0.8L3 3L0.8 5.2" stroke="#888" fill="none" stroke-width="0.8"/></svg>
<div class="t" style="left:951.8px;top:140.12px;font-size:6.5px;color:#222;transform:scaleX(0.712);transform-origin:0 0;">LED</div>
<svg style="left:946.3px;top:147.8px" width="4" height="6"><path d="M0.8 0.8L3 3L0.8 5.2" stroke="#888" fill="none" stroke-width="0.8"/></svg>
<div class="t" style="left:951.8px;top:148.42px;font-size:6.5px;color:#222;transform:scaleX(0.850);transform-origin:0 0;">PIC-Controller</div>
<svg style="left:946.3px;top:156.5px" width="4" height="6"><path d="M0.8 0.8L3 3L0.8 5.2" stroke="#888" fill="none" stroke-width="0.8"/></svg>
<div class="t" style="left:951.8px;top:157.12px;font-size:6.5px;color:#222;transform:scaleX(0.762);transform-origin:0 0;">SMD</div>
<svg style="left:946.3px;top:165.2px" width="4" height="6"><path d="M0.8 0.8L3 3L0.8 5.2" stroke="#888" fill="none" stroke-width="0.8"/></svg>
<div class="t" style="left:951.8px;top:165.82px;font-size:6.5px;color:#222;transform:scaleX(0.878);transform-origin:0 0;">Traco-DC-Converter</div>
<svg style="left:0;top:0" width="1024" height="576"><path d="M956.5 95V108.5H959M956.5 99.5H959" stroke="#aaa" stroke-width="0.6" stroke-dasharray="0.8 0.8" fill="none"/></svg>
<div class="ab" style="left:926px;top:345px;width:98px;height:42px;background:#f0f0f0"></div>
<svg style="left:931.5px;top:349px" width="8" height="8"><rect x="0.5" y="0.5" width="6.5" height="6.5" fill="#fafafa" stroke="#555" stroke-width="0.8"/><path d="M1.8 3.8L3.3 5.4L6 1.6" stroke="#333" stroke-width="0.9" fill="none"/></svg>
<div class="t" style="left:940px;top:350.12px;font-size:6.5px;color:#222;transform:scaleX(0.885);transform-origin:0 0;">Add as component</div>
<svg style="left:0;top:0" width="1024" height="576"><rect x="932.5" y="359.5" width="7" height="7" fill="#1a2a8a"/><rect x="934" y="360" width="4" height="2.5" fill="#ddd"/><path d="M945.5 361H951.5M946.5 361L947 367H950L950.5 361" stroke="#444" stroke-width="1.2" fill="#666"/><path d="M982 362A3.2 3.2 0 1 1 979 360.3" stroke="#222" stroke-width="1.3" fill="none"/><path d="M978 358.5L980.5 360.5L978 362.3Z" fill="#222"/><circle cx="992" cy="363.5" r="3.3" fill="#300"/><circle cx="992" cy="363.5" r="1.2" fill="#822"/><path d="M1001.5 367H1008.5M1005 359.5V364M1003 362L1005 364L1007 362" stroke="#333" stroke-width="1.2" fill="none"/><text x="1010.8" y="366.3" font-family="Liberation Sans" font-size="6.3" fill="#222" textLength="11" lengthAdjust="spacingAndGlyphs">TOP</text></svg>
<div class="ab" style="left:930px;top:370px;width:92px;height:17px;background:#e6e6e6"></div>
<svg style="left:0;top:0" width="1024" height="576"><circle cx="944.3" cy="460.3" r="5.2" fill="none" stroke="#1ec81e" stroke-width="7"/><circle cx="1009.3" cy="460.3" r="5.2" fill="none" stroke="#1ec81e" stroke-width="7"/><circle cx="944.3" cy="460.3" r="1.5" fill="#000"/><rect x="954.5" y="449.2" width="44.8" height="22.3" fill="none" stroke="#b01818" stroke-width="0.8"/></svg>
<div class="t" style="left:983.5px;top:526.12px;font-size:6.5px;color:#c8c8c8;transform:scaleX(0.891);transform-origin:0 0;">Drag and Drop</div>
<div class="ab" style="left:0;top:532px;width:1024px;height:23px;background:#f0f0f0"></div>
<div class="t" style="left:4px;top:536.82px;font-size:6.5px;color:#222;">X:</div>
<div class="t" style="left:16px;top:536.82px;font-size:6.5px;color:#222;transform:scaleX(0.861);transform-origin:0 0;">99.109 mm</div>
<div class="t" style="left:4px;top:546.32px;font-size:6.5px;color:#222;">Y:</div>
<div class="t" style="left:16px;top:546.32px;font-size:6.5px;color:#222;transform:scaleX(0.861);transform-origin:0 0;">42.970 mm</div>
<div class="ab" style="left:48px;top:533px;width:90px;height:22px;border:0.5px solid #d8d8d8"></div>
<div class="ab" style="left:48px;top:544px;width:26px;height:0.8px;background:#d0d0d0"></div>
<div class="t" style="left:49.5px;top:537.12px;font-size:6.5px;color:#333;transform:scaleX(0.997);transform-origin:0 0;">visible</div>
<div class="t" style="left:50.5px;top:546.82px;font-size:6.5px;color:#333;transform:scaleX(0.942);transform-origin:0 0;">active</div>
<div class="ab" style="left:73.8px;top:535px;width:64px;height:8.6px;background:#000"></div>
<div class="t" style="left:76.5px;top:537.07px;font-size:7px;color:#3050c0;font-weight:bold;">C1</div>
<div class="t" style="left:89.2px;top:537.07px;font-size:7px;color:#c02020;font-weight:bold;">S1</div>
<div class="t" style="left:101.5px;top:537.07px;font-size:7px;color:#2a9a2a;font-weight:bold;">C2</div>
<div class="t" style="left:114px;top:537.07px;font-size:7px;color:#c8b030;font-weight:bold;">S2</div>
<div class="t" style="left:129.5px;top:537.07px;font-size:7px;color:#e8e8e8;font-weight:bold;">0</div>
<svg style="left:75.7px;top:545px" width="8" height="8"><circle cx="4" cy="4" r="3" fill="#fff" stroke="#444" stroke-width="0.7"/></svg>
<svg style="left:88.6px;top:545px" width="8" height="8"><circle cx="4" cy="4" r="3" fill="#fff" stroke="#444" stroke-width="0.7"/><circle cx="4" cy="4" r="1.5" fill="#222"/></svg>
<svg style="left:101.5px;top:545px" width="8" height="8"><circle cx="4" cy="4" r="3" fill="#fff" stroke="#444" stroke-width="0.7"/></svg>
<svg style="left:114.3px;top:545px" width="8" height="8"><circle cx="4" cy="4" r="3" fill="#fff" stroke="#444" stroke-width="0.7"/></svg>
<svg style="left:127.1px;top:545px" width="8" height="8"><circle cx="4" cy="4" r="3" fill="#fff" stroke="#444" stroke-width="0.7"/></svg>
<div class="ab" style="left:75.3px;top:544px;width:0.6px;height:11px;background:#d0d0d0"></div>
<div class="ab" style="left:88.2px;top:544px;width:0.6px;height:11px;background:#d0d0d0"></div>
<div class="ab" style="left:101px;top:544px;width:0.6px;height:11px;background:#d0d0d0"></div>
<div class="ab" style="left:113.8px;top:544px;width:0.6px;height:11px;background:#d0d0d0"></div>
<div class="ab" style="left:126.7px;top:544px;width:0.6px;height:11px;background:#d0d0d0"></div>
<div class="t" style="left:140px;top:544.27px;font-size:6px;color:#444;">?</div>
<div class="ab" style="left:148px;top:533px;width:21px;height:20px;background:#ececec;border:0.5px solid #d2d2d2"></div>
<div class="ab" style="left:170px;top:533px;width:20px;height:20px;background:#ececec;border:0.5px solid #d2d2d2"></div>
<div class="ab" style="left:192px;top:533px;width:21px;height:20px;background:#ececec;border:0.5px solid #d2d2d2"></div>
<svg style="left:0;top:0" width="1024" height="576"><path d="M152.5 540Q156 535 159 541Q161 545 164 544" stroke="#777" stroke-width="1.5" fill="none"/><circle cx="164" cy="544" r="1.3" fill="none" stroke="#777"/><path d="M180 536V549M173.5 542.5H186.5" stroke="#333" stroke-width="1"/><circle cx="180" cy="542.5" r="3.3" fill="#c01818"/><circle cx="180" cy="542.5" r="1.2" fill="#300"/><path d="M196 548L208 537M197 537L208 548" stroke="#c83030" stroke-width="1.3"/><ellipse cx="202" cy="542" rx="5" ry="2.5" transform="rotate(-30 202 542)" fill="none" stroke="#333" stroke-width="1.1"/><path d="M215 534.5H1024M215 543.5H1024" stroke="#c8c8c8" stroke-width="0.8"/></svg>
<div class="ab" style="left:0;top:555px;width:1024px;height:21px;background:linear-gradient(90deg,#1f1f1f 0%,#262523 20%,#2e2a25 50%,#3a3128 68%,#2c2925 80%,#242322 100%)"></div>
<div class="ab" style="left:0;top:555px;width:26px;height:21px;background:#1b1b1b"></div>
<svg style="left:8px;top:561px" width="9" height="9"><rect x="0" y="0" width="4" height="4" fill="#eee"/><rect x="4.8" y="0" width="4" height="4" fill="#eee"/><rect x="0" y="4.8" width="4" height="4" fill="#eee"/><rect x="4.8" y="4.8" width="4" height="4" fill="#eee"/></svg>
<div class="ab" style="left:26px;top:555px;width:154px;height:21px;background:#f0f0f0"></div>
<svg style="left:32px;top:560px" width="10" height="10"><circle cx="6" cy="4" r="3" fill="none" stroke="#333" stroke-width="1"/><path d="M4 6L1 9" stroke="#333" stroke-width="1.2"/></svg>
<div class="t" style="left:47px;top:562.46px;font-size:8px;color:#555;transform:scaleX(0.962);transform-origin:0 0;">Type here to search</div>
<svg style="left:140px;top:555px" width="40" height="21"><rect width="40" height="21" fill="#e8ddd0"/><path d="M0 21V8L3 5L6 8V21Z" fill="#c8a080"/><path d="M8 21V10L15 4L22 10V21Z" fill="#a87850"/><path d="M23 21V9L27 6L31 9V21Z" fill="#d8b090"/><path d="M31 21V7L36 3L40 6V21Z" fill="#b08868"/><rect x="12" y="13" width="6" height="8" fill="#604030"/><path d="M1 6L3 2L5 6Z" fill="#c04040"/></svg>
<svg style="left:0;top:0" width="1024" height="576"><path d="M187 562H197M187 570H197M189 564V568M195 564V568" stroke="#ddd" stroke-width="1.2"/><circle cx="219" cy="566" r="5" fill="#c060d0"/><path d="M215 563Q219 560 223 563L221 569Q217 571 215 568Z" fill="#40a0f0"/><circle cx="221" cy="568" r="2.5" fill="#f0a040"/><circle cx="245" cy="566" r="5.5" fill="#1a8ad8"/><path d="M241 567Q244 561 249 564Q246 564 246 567Q247 570 250 569Q246 573 241 567Z" fill="#5ad06a"/><rect x="265" y="562" width="12" height="8" fill="#f0c040"/><rect x="265" y="564" width="12" height="6" fill="#f8d860"/><rect x="267" y="567" width="8" height="3" fill="#3a7ad0"/><rect x="291.5" y="561" width="12" height="10" rx="1" fill="#f4f4f4"/><rect x="294" y="563" width="3" height="3" fill="#e04020"/><rect x="298" y="563" width="3" height="3" fill="#60b030"/><rect x="294" y="567" width="3" height="3" fill="#2080e0"/><rect x="298" y="567" width="3" height="3" fill="#f0b020"/><rect x="317.5" y="561.5" width="12" height="9" fill="#2a8ae0"/><path d="M317.5 561.5L323.5 567L329.5 561.5" stroke="#dff" stroke-width="1" fill="none"/><circle cx="349.5" cy="566" r="5.5" fill="#f07030"/><circle cx="349" cy="567" r="3" fill="#8040c0"/><path d="M345 561Q352 559 355 565Q352 561 348 562Z" fill="#f0c030"/><rect x="363" y="555" width="26" height="21" fill="#3c3a37"/><circle cx="376" cy="567.5" r="4" fill="#22a022"/><circle cx="374" cy="563" r="2.3" fill="#2cb02c"/><circle cx="376.5" cy="567.5" r="1" fill="#cfc"/><path d="M366 575H386" stroke="#9ab" stroke-width="1"/></svg>
<svg style="left:768px;top:559px" width="16" height="14"><path d="M1 12Q0 8 4 8Q5 4 9 5Q13 5 13 9Q15 9 15 12Z" fill="#d8e0ec"/><circle cx="9" cy="5" r="3" fill="#e04030"/></svg>
<div class="t" style="left:786px;top:562.96px;font-size:8px;color:#eee;transform:scaleX(0.839);transform-origin:0 0;">20°C</div>
<div class="t" style="left:806px;top:562.96px;font-size:8px;color:#eee;transform:scaleX(0.949);transform-origin:0 0;">Mostly cloudy</div>
<svg style="left:0;top:0" width="1024" height="576"><path d="M865 568L868 565L871 568" stroke="#ddd" stroke-width="1" fill="none"/><rect x="879.5" y="562" width="5" height="8" fill="none" stroke="#ddd" stroke-width="0.9"/><path d="M885 565H887V569" stroke="#ddd" stroke-width="0.8" fill="none"/><path d="M889 569Q889 565 893 565Q894 562 897 563Q900 564 899 567Q901 567 900 569Z" fill="#eee"/><rect x="903" y="561" width="8" height="8" fill="#556" stroke="#ccc" stroke-width="0.8"/><circle cx="911" cy="569.5" r="2" fill="#f0a020"/><rect x="915.5" y="562.5" width="9" height="6.5" fill="none" stroke="#ccc" stroke-width="0.9"/><path d="M918 571H923" stroke="#ccc"/><path d="M929 564H931L934 561.5V571L931 568.5H929Z" fill="none" stroke="#ddd" stroke-width="0.8"/><path d="M936 564Q937.5 566 936 568M938 562.5Q940.5 566 938 570" stroke="#ddd" stroke-width="0.7" fill="none"/><path d="M1002 561H1011V568H1006L1004 570V568H1002Z" fill="none" stroke="#ddd" stroke-width="0.9"/><path d="M1021.5 555V576" stroke="#666" stroke-width="0.6"/></svg>
<div class="t" style="left:942px;top:563.87px;font-size:7px;color:#eee;transform:scaleX(0.857);transform-origin:0 0;">ENG</div>
<div class="t" style="left:965px;top:558.87px;font-size:7px;color:#eee;transform:scaleX(0.882);transform-origin:0 0;">6:06 PM</div>
<div class="t" style="left:962px;top:567.87px;font-size:7px;color:#eee;transform:scaleX(0.869);transform-origin:0 0;">11/09/2024</div>
<div class="ab" style="left:0px;top:80px;width:65.6px;height:60px;overflow:hidden">
<div class="t" style="left:19.5px;top:6.3px;font-size:14px;color:#7a5c5c;transform:scaleX(0.890);transform-origin:0 0">Bryan1</div>
<div class="t" style="left:19px;top:29.8px;font-size:10.5px;color:#7a5c5c;transform:scaleX(1.006);transform-origin:0 0">www.thebackshed.com</div>
<div class="t" style="left:19px;top:44.5px;font-size:10.5px;color:#7a5c5c;transform:scaleX(0.964);transform-origin:0 0">2024-09-11</div>
</div>
<div class="ab" style="left:65.6px;top:80px;width:134.4px;height:60px;overflow:hidden">
<div class="t" style="left:-46.099999999999994px;top:6.3px;font-size:14px;color:#d2c0c0;transform:scaleX(0.890);transform-origin:0 0">Bryan1</div>
<div class="t" style="left:-46.599999999999994px;top:29.8px;font-size:10.5px;color:#d2c0c0;transform:scaleX(1.006);transform-origin:0 0">www.thebackshed.com</div>
<div class="t" style="left:-46.599999999999994px;top:44.5px;font-size:10.5px;color:#d2c0c0;transform:scaleX(0.964);transform-origin:0 0">2024-09-11</div>
</div>
</body></html>
